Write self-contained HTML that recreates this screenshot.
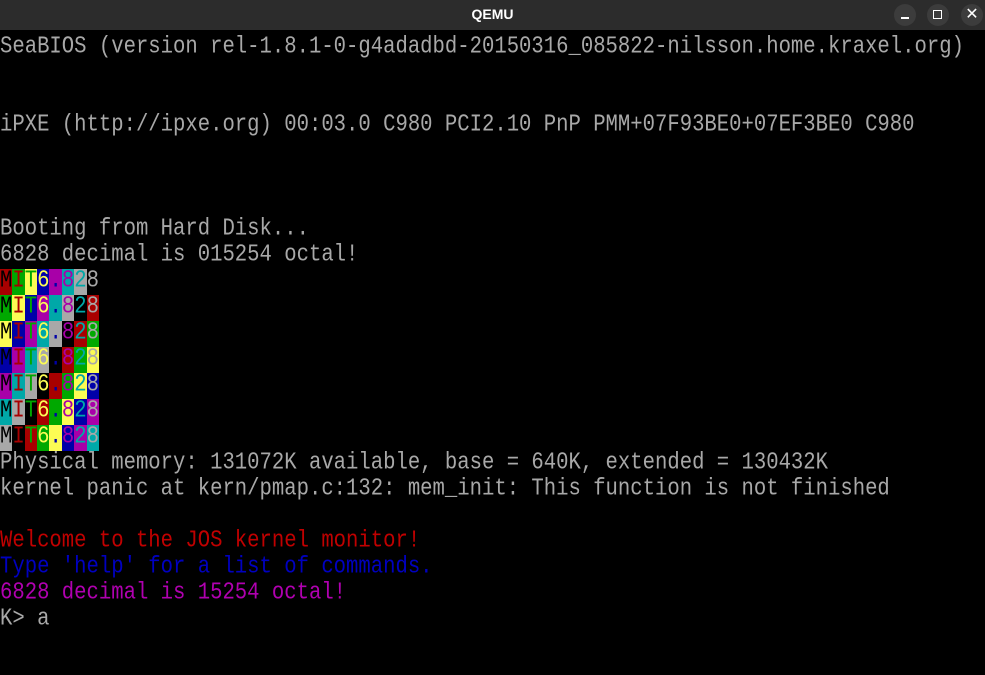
<!DOCTYPE html>
<html><head><style>
body{margin:0;width:985px;height:675px;background:#000;overflow:hidden;position:relative}
#tb{position:absolute;left:0;top:0;width:985px;height:30px;background:#2c2c2c;color:#fff;font:bold 14px "Liberation Sans",sans-serif;text-align:center;line-height:28px}
.btn{position:absolute;top:4px;width:22px;height:22px;border-radius:11px;background:#3c3c3c}
#scr{position:absolute;left:0;top:35px;width:985px}
.l{position:absolute;left:0;height:26px;white-space:pre;font:20.6px/26px "Liberation Mono",monospace;color:#a8a8a8;transform:scaleY(1.15);transform-origin:0 50%}
.blk{position:absolute;left:0;height:26px;width:99px}
.blk span{position:absolute;top:0;height:26px;width:12.37px;font:20.6px/26px "Liberation Mono",monospace;text-align:center}
</style></head><body>
<div id="tb">QEMU
<div class="btn" style="left:894px"><div style="position:absolute;left:7px;top:13px;width:8px;height:1.5px;background:#fff"></div></div>
<div class="btn" style="left:927px"><div style="position:absolute;left:6px;top:6px;border:1.5px solid #fff;width:7px;height:7px"></div></div>
<div class="btn" style="left:961px;color:#fff;font:16px/22px 'Liberation Sans',sans-serif">✕</div>
</div>
<div id="scr">
<div class="l" style="top:0">SeaBIOS (version rel-1.8.1-0-g4adadbd-20150316_085822-nilsson.home.kraxel.org)</div>
<div class="l" style="top:78px">iPXE (http://ipxe.org) 00:03.0 C980 PCI2.10 PnP PMM+07F93BE0+07EF3BE0 C980</div>
<div class="l" style="top:182px">Booting from Hard Disk...</div>
<div class="l" style="top:208px">6828 decimal is 015254 octal!</div>
<div id="blocks"></div>
<div class="l" style="top:416px">Physical memory: 131072K available, base = 640K, extended = 130432K</div>
<div class="l" style="top:442px">kernel panic at kern/pmap.c:132: mem_init: This function is not finished</div>
<div class="l" style="top:494px;color:#c00000">Welcome to the JOS kernel monitor!</div>
<div class="l" style="top:520px;color:#0000c0">Type 'help' for a list of commands.</div>
<div class="l" style="top:546px;color:#b000b0">6828 decimal is 15254 octal!</div>
<div class="l" style="top:572px">K&gt; a</div>
</div>
<script>
var pal=["#000","#a80000","#00a800","#fcfc54","#0000a8","#a800a8","#00a8a8","#a8a8a8"];
var ch="MIT6.828",h="";
for(var r=0;r<7;r++){h+='<div class="blk" style="top:'+(234+r*26)+'px">';
for(var i=0;i<8;i++){var bg=pal[(i+r+1)%8];if(r==0&&i==7)bg="#000";
h+='<span style="left:'+(i*12.37)+'px;background:'+bg+';color:'+pal[i]+'"><span style="position:static;display:inline-block;transform:scaleY(1.15)">'+ch[i]+'</span></span>';}
h+='</div>';}
document.getElementById("blocks").innerHTML=h;
</script>
</body></html>
